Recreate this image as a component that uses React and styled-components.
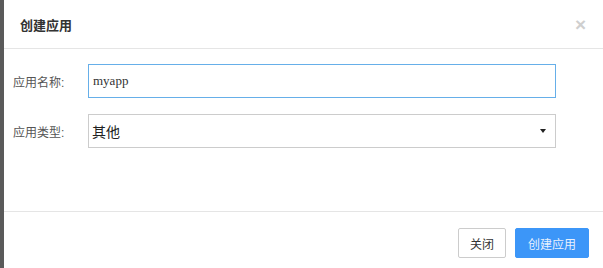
import React from "react";
import styled, { createGlobalStyle } from "styled-components";

const GlobalStyle = createGlobalStyle`
    html, body {
        margin: 0;
        padding: 0;
        height: 100%;
        background: #5a5a5a;
    }
    #root {
        height: 100%;
    }
    * {
        box-sizing: border-box;
    }
`;

export default function App() {
    return (
        <>
            <GlobalStyle />
            <Backdrop>
                <Modal>
                    <Header>
                        <Title>创建应用</Title>
                        <Close>×</Close>
                    </Header>
                    <Body>
                        <Row>
                            <Label>应用名称:</Label>
                            <Input defaultValue="myapp" focused />
                        </Row>
                        <Row>
                            <Label>应用类型:</Label>
                            <Select>
                                <span>其他</span>
                                <Caret />
                            </Select>
                        </Row>
                    </Body>
                    <Footer>
                        <Button>关闭</Button>
                        <Button primary>创建应用</Button>
                    </Footer>
                </Modal>
            </Backdrop>
        </>
    );
}

const Backdrop = styled.div`
    display: flex;
    height: 100%;
    padding-left: 4px;
`;

const Modal = styled.div`
    flex: 1;
    display: flex;
    flex-direction: column;
    background: #fff;
    font-family: "Liberation Sans", "Noto Sans CJK SC", sans-serif;
    color: #333;
`;

const Header = styled.div`
    display: flex;
    align-items: center;
    justify-content: space-between;
    height: 49px;
    padding: 0 17px 0 16px;
    border-bottom: 1px solid #e5e5e5;
`;

const Title = styled.h4`
    margin: 0;
    font-size: 13px;
    font-weight: bold;
    color: #333;
`;

const Close = styled.span`
    font-size: 19px;
    font-weight: bold;
    color: #cfcfcf;
    line-height: 1;
`;

const Body = styled.div`
    flex: 1;
    display: flex;
    flex-direction: column;
    gap: 16px;
    padding: 15px 0 0 9px;
`;

const Row = styled.div`
    display: flex;
    align-items: center;
`;

const Label = styled.label`
    width: 75px;
    font-size: 12px;
    color: #555;
`;

const Input = styled.input`
    width: 468px;
    height: 34px;
    padding: 0 4px;
    border: 1px solid ${(p) => (p.focused ? "#66afe9" : "#ccc")};
    outline: none;
    font-family: "Liberation Serif", serif;
    font-size: 13px;
    color: #333;
`;

const Select = styled.div`
    display: flex;
    align-items: center;
    justify-content: space-between;
    width: 468px;
    height: 34px;
    padding: 0 9px 0 3px;
    border: 1px solid #ccc;
    font-size: 14px;
    color: #222;
`;

const Caret = styled.span`
    width: 0;
    height: 0;
    border-left: 3px solid transparent;
    border-right: 3px solid transparent;
    border-top: 4px solid #222;
`;

const Footer = styled.div`
    display: flex;
    justify-content: flex-end;
    gap: 9px;
    height: 57px;
    padding: 16px 14px 0 0;
    border-top: 1px solid #e5e5e5;
`;

const Button = styled.button`
    height: 30px;
    padding: 0 ${(p) => (p.primary ? "12px" : "11px")};
    border: 1px solid ${(p) => (p.primary ? "#3c96f8" : "#ccc")};
    border-radius: 2px;
    background: ${(p) => (p.primary ? "#3c96f8" : "#fff")};
    color: ${(p) => (p.primary ? "#e8f1fd" : "#333")};
    font-family: "Liberation Sans", "Noto Sans CJK SC", sans-serif;
    font-size: 12px;
`;
